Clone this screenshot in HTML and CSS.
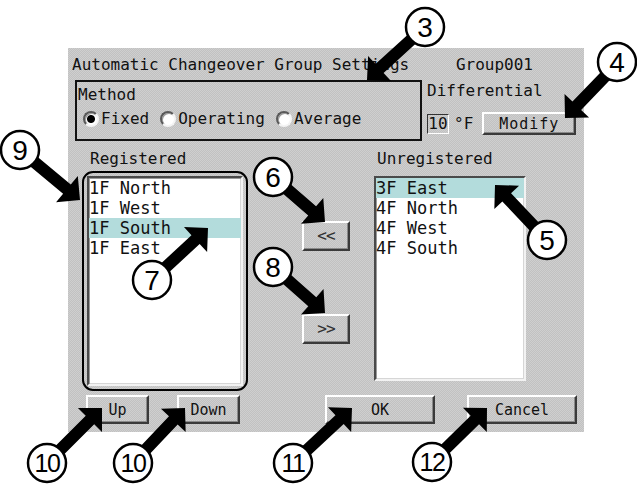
FILE: index.html
```html
<!DOCTYPE html>
<html lang="en">
<head>
    <meta charset="UTF-8">
    <title>Automatic Changeover Group Settings</title>
    <link rel="stylesheet" href="styles.css">
</head>
<body>
    <div class="stage">
        <div class="dialog">
            <div class="header">
                <span>Automatic Changeover Group Settings</span>
                <span class="group">Group001</span>
            </div>

            <!-- Method + Differential -->
            <div class="top">
                <div class="method">
                    <div class="caption">Method</div>
                    <div class="radios">
                        <span class="opt"><span class="radio checked"></span>Fixed</span>
                        <span class="opt"><span class="radio"></span>Operating</span>
                        <span class="opt"><span class="radio"></span>Average</span>
                    </div>
                </div>
                <div class="diff">
                    <div class="caption">Differential</div>
                    <div class="diff-row">
                        <span class="field">10</span>
                        <span class="unit">°F</span>
                        <span class="btn modify">Modify</span>
                    </div>
                </div>
            </div>

            <!-- Group lists -->
            <div class="labels">
                <span class="lbl-reg">Registered</span>
                <span>Unregistered</span>
            </div>
            <div class="lists">
                <div class="frame">
                    <ul class="list">
                        <li>1F North</li>
                        <li>1F West</li>
                        <li class="sel">1F South</li>
                        <li>1F East</li>
                    </ul>
                </div>
                <div class="movers">
                    <span class="btn move">&lt;&lt;</span>
                    <span class="btn move">&gt;&gt;</span>
                </div>
                <ul class="list unreg">
                    <li class="sel">3F East</li>
                    <li>4F North</li>
                    <li>4F West</li>
                    <li>4F South</li>
                </ul>
            </div>

            <div class="actions">
                <span class="btn small">Up</span>
                <span class="btn small down">Down</span>
                <span class="btn wide ok">OK</span>
                <span class="btn wide cancel">Cancel</span>
            </div>
        </div>

        <!-- Numbered callouts drawn over the dialog -->
        <svg class="callouts" width="637" height="484" viewBox="0 0 637 484">
            <defs>
                <polygon id="arrow" points="0,0 -17,-17 -17,-6 -80,-6 -80,6 -17,6 -17,17"/>
            </defs>
            <g fill="#000">
                <use href="#arrow" transform="translate(367 80) rotate(137.6)"/>
                <use href="#arrow" transform="translate(565 118) rotate(133.9)"/>
                <use href="#arrow" transform="translate(495 185) rotate(226.6)"/>
                <use href="#arrow" transform="translate(325 222) rotate(40.9)"/>
                <use href="#arrow" transform="translate(208 228) rotate(-42.9)"/>
                <use href="#arrow" transform="translate(325 313) rotate(41.5)"/>
                <use href="#arrow" transform="translate(80 200) rotate(39.8)"/>
                <use href="#arrow" transform="translate(102 408) rotate(-45)"/>
                <use href="#arrow" transform="translate(185 408) rotate(-46.6)"/>
                <use href="#arrow" transform="translate(352 408) rotate(-43)"/>
                <use href="#arrow" transform="translate(487 408) rotate(-44.5)"/>
            </g>
            <g fill="#fff" stroke="#000" stroke-width="2.5">
                <circle cx="425" cy="27" r="19"/>
                <circle cx="617" cy="62" r="19"/>
                <circle cx="547" cy="240" r="19"/>
                <circle cx="273" cy="177" r="19"/>
                <circle cx="152" cy="280" r="19"/>
                <circle cx="273" cy="267" r="19"/>
                <circle cx="20" cy="150" r="19"/>
                <circle cx="47" cy="463" r="19"/>
                <circle cx="133" cy="463" r="19"/>
                <circle cx="293" cy="463" r="19"/>
                <circle cx="432" cy="462" r="19"/>
            </g>
            <g class="num" text-anchor="middle">
                <text x="425" y="37">3</text>
                <text x="617" y="72">4</text>
                <text x="547" y="250">5</text>
                <text x="273" y="187">6</text>
                <text x="152" y="290">7</text>
                <text x="273" y="277">8</text>
                <text x="20" y="160">9</text>
                <text class="two" x="47" y="472">10</text>
                <text class="two" x="133" y="472">10</text>
                <text class="two" x="293" y="472">11</text>
                <text class="two" x="432" y="471">12</text>
            </g>
        </svg>
    </div>
</body>
</html>
```

FILE: styles.css
```css
body {
    margin: 0;
    background: #fff;
}
.stage {
    position: relative;
    width: 637px;
    height: 484px;
    overflow: hidden;
}
.dialog {
    width: 516px;
    height: 384px;
    margin: 48px 0 0 68px;
    background-color: #c8c8c8;
    background-image: repeating-conic-gradient(#c1c1c1 0 25%, #cfcfcf 0 50%);
    background-size: 2px 2px;
    font-family: "DejaVu Sans Mono", "Liberation Mono", monospace;
    font-size: 16px;
    line-height: 18px;
    color: #111;
}
.header {
    display: flex;
    justify-content: space-between;
    padding: 8px 51px 0 4px;
}
.top {
    display: flex;
    margin-top: 6px;
}
.method {
    width: 347px;
    height: 61px;
    margin-left: 7px;
    box-sizing: border-box;
    border: 2px solid #111;
}
.method .caption {
    margin: 4px 0 0 1px;
}
.radios {
    display: flex;
    gap: 11px;
    margin-top: 6px;
    padding-left: 6px;
}
.opt {
    display: flex;
    align-items: center;
    gap: 2px;
}
.radio {
    width: 16px;
    height: 16px;
    box-sizing: border-box;
    border-radius: 50%;
    border: 2px solid;
    border-color: #5a5a5a #f4f4f4 #f4f4f4 #5a5a5a;
    box-shadow: inset 1px 1px 0 #9a9a9a;
    background: #fff;
}
.radio.checked {
    background: radial-gradient(circle, #000 0 3.5px, #fff 4.5px);
}
.diff {
    margin-left: 5px;
}
.diff .caption {
    margin-top: 2px;
}
.diff-row {
    display: flex;
    align-items: center;
    margin-top: 12px;
}
.field {
    width: 22px;
    height: 20px;
    box-sizing: border-box;
    border: 1px solid;
    border-color: #333 #fff #fff #333;
    text-align: center;
    line-height: 18px;
}
.unit {
    margin-left: 5px;
}
.btn {
    display: flex;
    align-items: center;
    justify-content: center;
    box-sizing: border-box;
    border: 2px solid;
    border-color: #fff #3a3a3a #3a3a3a #fff;
    box-shadow: inset -1px -1px 0 #8a8a8a;
    font-size: 15px;
}
.modify {
    width: 94px;
    height: 23px;
    margin-left: 9px;
    letter-spacing: 1px;
}
.labels {
    display: flex;
    margin-top: 9px;
}
.lbl-reg {
    width: 309px;
    padding-left: 22px;
    box-sizing: border-box;
}
.lists {
    display: flex;
    align-items: flex-start;
    margin-top: 3px;
    padding-left: 14px;
}
.frame {
    width: 166px;
    height: 220px;
    box-sizing: border-box;
    border: 2px solid #000;
    border-radius: 11px;
    padding: 3px;
}
.list {
    list-style: none;
    margin: 0;
    padding: 0;
    width: 156px;
    height: 210px;
    box-sizing: border-box;
    border: 2px solid;
    border-color: #4a4a4a #f2f2f2 #f2f2f2 #4a4a4a;
    box-shadow: inset 1px 1px 0 #9a9a9a, inset -1px -1px 0 #d6d6d6;
    background: #fff;
    font-size: 17px;
    line-height: 20px;
}
.list li {
    white-space: pre;
}
.list .sel {
    background: #b3dcdc;
}
.movers {
    display: flex;
    flex-direction: column;
    gap: 63px;
    width: 48px;
    margin-left: 54px;
    padding-top: 50px;
}
.move {
    height: 30px;
    font-size: 16px;
    letter-spacing: -1px;
    color: #333;
}
.unreg {
    width: 152px;
    height: 205px;
    margin: 5px 0 0 24px;
}
.actions {
    display: flex;
    margin-top: 4px;
}
.actions .btn {
    height: 29px;
}
.small {
    width: 63px;
    margin-left: 18px;
}
.small.down {
    margin-left: 28px;
}
.wide {
    width: 110px;
}
.ok {
    margin-left: 85px;
}
.cancel {
    margin-left: 32px;
}
.callouts {
    position: absolute;
    top: 0;
    left: 0;
    pointer-events: none;
}
.num text {
    font-family: "Liberation Sans", Arial, sans-serif;
    font-size: 28px;
    fill: #000;
}
.num text.two {
    font-size: 25px;
    letter-spacing: -1.5px;
}
```
